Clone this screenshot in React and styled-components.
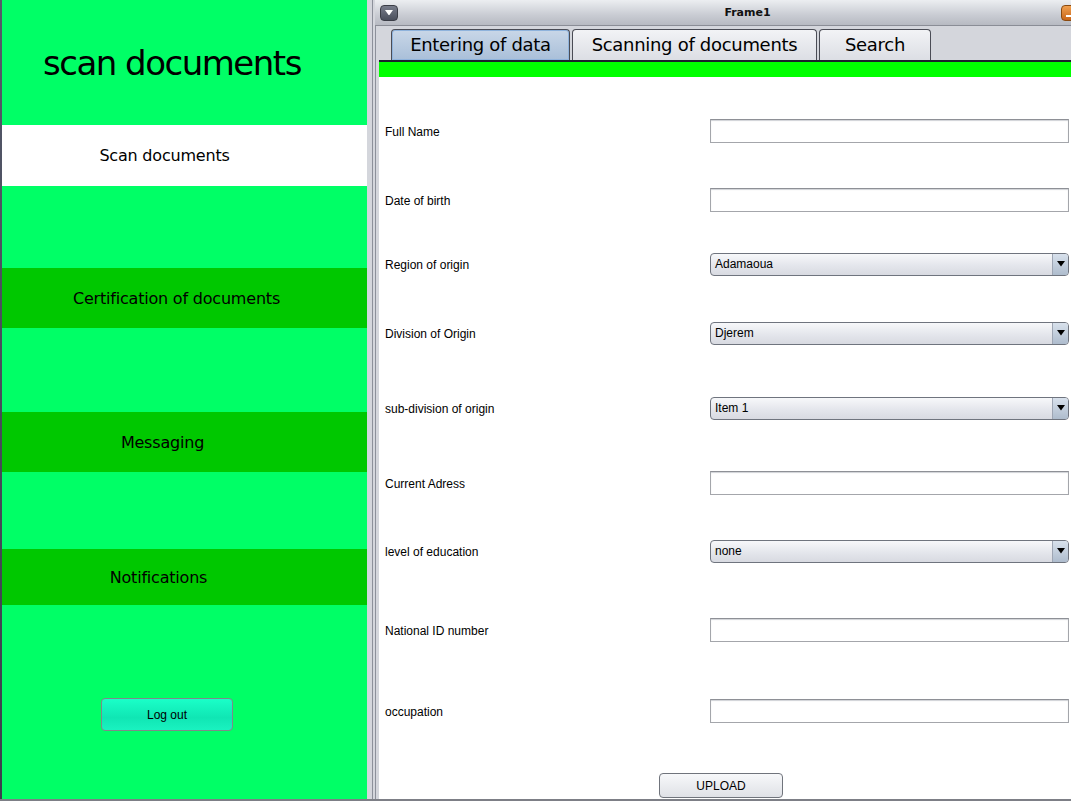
import React from 'react';
import styled, { createGlobalStyle } from 'styled-components';

const GlobalStyle = createGlobalStyle`
  html, body { margin: 0; padding: 0; overflow: hidden; background: #d4d6dc; }
`;

const Page = styled.div`
  display: flex;
  width: 1071px;
  height: 799px;
  border-bottom: 2px solid #7d7f86;
  overflow: hidden;
`;

const EdgeStrip = styled.div`
  width: 2px;
  background: linear-gradient(#55596a, #3b3f4d);
`;

const Sidebar = styled.div`
  width: 365px;
  background: #00ff66;
  display: flex;
  flex-direction: column;
  font-family: "DejaVu Sans", Tahoma, sans-serif;
`;

const Brand = styled.div`
  height: 125px;
  display: flex;
  align-items: center;
  padding-left: 41px;
  font-size: 34px;
  color: #000;
  letter-spacing: -1.5px;
`;

const MenuItem = styled.div`
  height: ${p => p.h}px;
  margin-top: ${p => p.gap}px;
  background: ${p => (p.active ? '#ffffff' : '#00c800')};
  display: flex;
  align-items: center;
  justify-content: center;
  padding-right: ${p => p.shift}px;
  font-size: 16px;
  letter-spacing: -0.2px;
  color: #000;
`;

const LogoutWrap = styled.div`
  margin-top: 93px;
  padding-left: 99px;
`;

const LogoutButton = styled.button`
  width: 132px;
  height: 33px;
  border: 1px solid #7f8a88;
  border-radius: 4px;
  background: linear-gradient(#1affc8, #10e6b4 60%, #1af2c0);
  font-family: "Liberation Sans", Arial, sans-serif;
  font-size: 12px;
  color: #000;
`;

const Gutter = styled.div`
  width: 5px;
  background: #d4d6dc;
  border-right: 1px solid #8c909a;
`;

const Window = styled.div`
  flex: 1;
  display: flex;
  flex-direction: column;
  background: #d4d6dc;
  padding-left: 2px;
`;

const TitleBar = styled.div`
  height: 25px;
  border-bottom: 1px solid #8a8d96;
  background: linear-gradient(#eceef1, #c9ccd3 60%, #b7bac2);
  display: flex;
  align-items: center;
  padding-left: 5px;
`;

const MenuButton = styled.div`
  width: 18px;
  height: 16px;
  border-radius: 4px;
  background: linear-gradient(#777c8a, #4a4f5c);
  border: 1px solid #3a3d46;
  box-sizing: border-box;
  display: flex;
  align-items: center;
  justify-content: center;
`;

const Title = styled.div`
  flex: 1;
  text-align: center;
  padding-left: 36px;
  font-family: "DejaVu Sans", Tahoma, sans-serif;
  font-weight: bold;
  font-size: 11px;
  color: #111;
`;

const CloseButton = styled.div`
  width: 18px;
  height: 16px;
  margin-right: -8px;
  border-radius: 4px;
  background: linear-gradient(#f0a050, #c8661a);
  border: 1px solid #8a4a10;
  box-sizing: border-box;
  display: flex;
  align-items: flex-end;
  justify-content: center;
  padding-bottom: 3px;
`;

const Body = styled.div`
  flex: 1;
  display: flex;
  flex-direction: column;
  padding-left: 3px;
  border-left: 1px solid #8c909a;
`;

const TabStrip = styled.div`
  height: 32px;
  padding-top: 2px;
  padding-left: 12px;
  display: flex;
  align-items: flex-end;
  gap: 2px;
  border-bottom: 2px solid #1d1f2c;
  font-family: "DejaVu Sans", Tahoma, sans-serif;
`;

const Tab = styled.div`
  width: ${p => p.w}px;
  height: 31px;
  box-sizing: border-box;
  border: 1px solid #4a4c55;
  border-bottom: none;
  border-radius: 4px 4px 0 0;
  background: ${p => (p.selected
    ? 'linear-gradient(#c9d7e8, #a9bfd9)'
    : 'linear-gradient(#f2f3f6, #dcdee4)')};
  box-shadow: ${p => (p.selected ? 'inset 0 0 0 1px #8fb3dc' : 'none')};
  display: flex;
  align-items: center;
  justify-content: center;
  padding-bottom: 2px;
  font-size: 18px;
  color: #000;
  letter-spacing: -0.3px;
`;

const GreenBar = styled.div`
  height: 15px;
  background: #00ff00;
`;

const Form = styled.div`
  flex: 1;
  background: #ffffff;
  padding: 42px 0 0 6px;
  display: flex;
  flex-direction: column;
  font-family: "Liberation Sans", Arial, sans-serif;
  font-size: 12px;
  color: #000;
`;

const Row = styled.div`
  display: flex;
  align-items: center;
  height: 24px;
  margin-top: ${p => p.gap}px;
`;

const Label = styled.div`
  width: 325px;
  padding-top: 2px;
`;

const TextInput = styled.div`
  width: 359px;
  height: 24px;
  box-sizing: border-box;
  border: 1px solid #a4a6ab;
  border-top-color: #8e9096;
  box-shadow: inset 0 1px 1px #d0d2d6;
  background: #fff;
`;

const Combo = styled.div`
  width: 359px;
  height: 23px;
  box-sizing: border-box;
  border: 1px solid #6f747e;
  border-radius: 4px;
  background: linear-gradient(#f7f8fa, #e4e6ec 55%, #d8dae1);
  display: flex;
  align-items: center;
  overflow: hidden;
`;

const ComboText = styled.div`
  flex: 1;
  padding-left: 4px;
`;

const ComboArrow = styled.div`
  width: 15px;
  height: 100%;
  border-left: 1px solid #9ea6b4;
  background: linear-gradient(#d8e1ec, #aebccd);
  display: flex;
  align-items: center;
  justify-content: center;
`;

const UploadRow = styled.div`
  margin-top: 50px;
  padding-left: 274px;
`;

const UploadButton = styled.button`
  width: 124px;
  height: 25px;
  border: 1px solid #70747c;
  border-radius: 4px;
  background: linear-gradient(#f7f8fa, #dfe1e6);
  font-family: "Liberation Sans", Arial, sans-serif;
  font-size: 12px;
  color: #000;
`;

const Triangle = ({ color = '#000', size = 8 }) => (
  <svg width={size} height={size * 0.7} viewBox="0 0 10 7">
    <polygon points="0,0 10,0 5,7" fill={color} />
  </svg>
);

const fields = [
  { label: 'Full Name', gap: 0 },
  { label: 'Date of birth', gap: 45 },
  { label: 'Region of origin', gap: 40, value: 'Adamaoua' },
  { label: 'Division of Origin', gap: 45, value: 'Djerem' },
  { label: 'sub-division of origin', gap: 51, value: 'Item 1' },
  { label: 'Current Adress', gap: 51 },
  { label: 'level of education', gap: 44, value: 'none' },
  { label: 'National ID number', gap: 55 },
  { label: 'occupation', gap: 57 },
];

const menu = [
  { text: 'Scan documents', h: 61, gap: 0, active: true, shift: 40 },
  { text: 'Certification of documents', h: 60, gap: 82, shift: 16 },
  { text: 'Messaging', h: 60, gap: 84, shift: 44 },
  { text: 'Notifications', h: 56, gap: 77, shift: 52 },
];

export default function App() {
  return (
    <>
      <GlobalStyle />
      <Page>
        <EdgeStrip />
        <Sidebar>
          <Brand>scan documents</Brand>
          {menu.map(m => (
            <MenuItem key={m.text} h={m.h} gap={m.gap} active={m.active} shift={m.shift}>
              {m.text}
            </MenuItem>
          ))}
          <LogoutWrap>
            <LogoutButton>Log out</LogoutButton>
          </LogoutWrap>
        </Sidebar>
        <Gutter />
        <Window>
          <TitleBar>
            <MenuButton><Triangle color="#fff" size={8} /></MenuButton>
            <Title>Frame1</Title>
            <CloseButton>
              <svg width="8" height="2"><rect width="8" height="2" fill="#fff" /></svg>
            </CloseButton>
          </TitleBar>
          <Body>
            <TabStrip>
              <Tab w={179} selected>Entering of data</Tab>
              <Tab w={245}>Scanning of documents</Tab>
              <Tab w={112}>Search</Tab>
            </TabStrip>
            <GreenBar />
            <Form>
              {fields.map(f => (
                <Row key={f.label} gap={f.gap}>
                  <Label>{f.label}</Label>
                  {f.value ? (
                    <Combo>
                      <ComboText>{f.value}</ComboText>
                      <ComboArrow><Triangle size={8} /></ComboArrow>
                    </Combo>
                  ) : (
                    <TextInput />
                  )}
                </Row>
              ))}
              <UploadRow>
                <UploadButton>UPLOAD</UploadButton>
              </UploadRow>
            </Form>
          </Body>
        </Window>
      </Page>
    </>
  );
}
